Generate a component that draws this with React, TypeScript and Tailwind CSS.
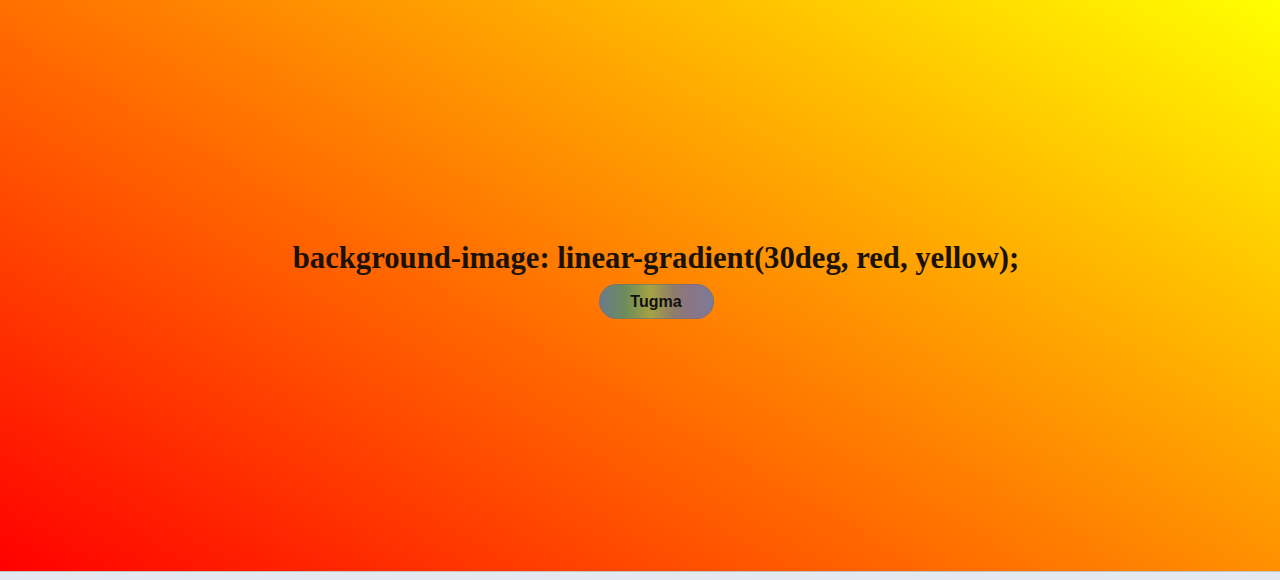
import React from 'react';

const App: React.FC = () => {
  return (
    <div className="w-[1280px] h-[580px] flex flex-col overflow-hidden">
      <div className="h-[571px] pl-[32px] flex flex-col items-center justify-center bg-[linear-gradient(30deg,red,yellow)]">
        <h1 className="font-['Liberation_Serif',serif] font-bold text-[30.7px] leading-[36px] text-[#1a1208] mt-[-12px]">
          background-image: linear-gradient(30deg, red, yellow);
        </h1>
        <button className="mt-[8px] w-[115px] h-[35px] rounded-full border border-[#7a6f6a]/60 bg-[linear-gradient(90deg,#6a7c8c,#6c8c5a_22%,#a5a245_45%,#8e7c6a_65%,#8a7488_82%,#7c7c98)] font-['Liberation_Sans',sans-serif] font-bold text-[16px] text-[#111]">
          Tugma
        </button>
      </div>
      <div className="flex-1 bg-[#e2e9f1] border-t border-[#c9c2b8]"></div>
    </div>
  );
};

export default App;
